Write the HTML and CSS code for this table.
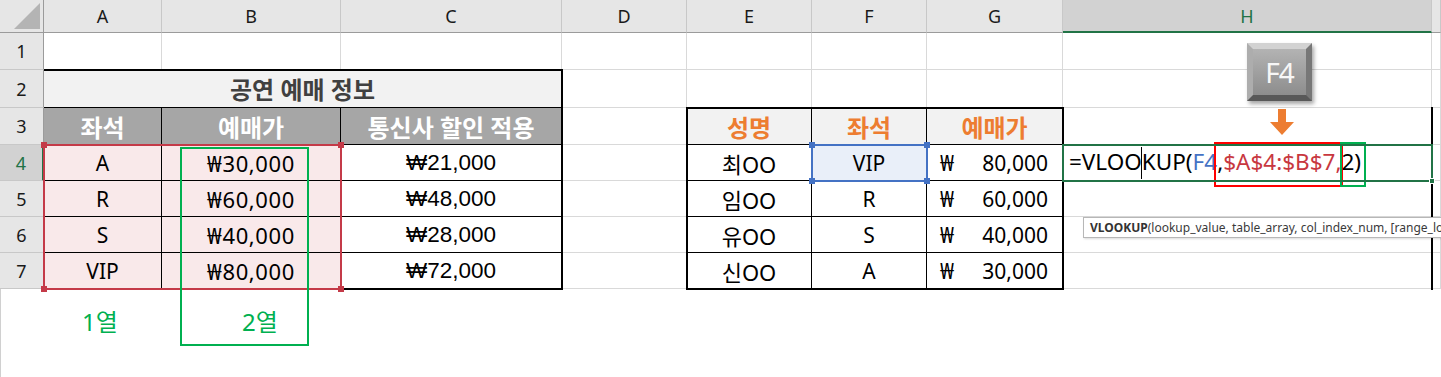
FILE: index.html
```html
<!DOCTYPE html>
<html lang="ko">
<head>
<meta charset="utf-8">
<title>VLOOKUP F4</title>
<link rel="stylesheet" href="styles.css">
</head>
<body>
<div class="sheet">
  <div class="grid">
    <!-- column headers -->
    <div class="corner"><svg width="26" height="26" viewBox="0 0 26 26"><polygon points="26,0 26,26 0,26" fill="#b4b4b4"/></svg></div>
    <div class="ch">A</div>
    <div class="ch">B</div>
    <div class="ch">C</div>
    <div class="ch">D</div>
    <div class="ch">E</div>
    <div class="ch">F</div>
    <div class="ch">G</div>
    <div class="ch sel">H</div>
    <div class="ch"></div>

    <!-- row 1 -->
    <div class="rh">1</div>
    <div class="c"></div><div class="c"></div><div class="c"></div><div class="c"></div>
    <div class="c"></div><div class="c"></div><div class="c"></div><div class="c"></div><div class="c"></div>

    <!-- row 2 -->
    <div class="rh">2</div>
    <div class="c title">공연 예매 정보</div>
    <div class="c"></div><div class="c"></div><div class="c"></div><div class="c"></div><div class="c"></div><div class="c"></div>

    <!-- row 3 -->
    <div class="rh">3</div>
    <div class="c th bk-r">좌석</div>
    <div class="c th bk-r">예매가</div>
    <div class="c th">통신사 할인 적용</div>
    <div class="c"></div>
    <div class="c oh bk-r">성명</div>
    <div class="c oh bk-r">좌석</div>
    <div class="c oh">예매가</div>
    <div class="c"></div>
    <div class="c"></div>

    <!-- row 4 -->
    <div class="rh sel">4</div>
    <div class="c pk bk-r bk-b">A</div>
    <div class="c pk won bk-r bk-b">₩30,000</div>
    <div class="c cc bk-b">₩21,000</div>
    <div class="c"></div>
    <div class="c nm bk-r bk-b">최OO</div>
    <div class="c bl bk-r bk-b">VIP</div>
    <div class="c acct bk-b"><span>₩</span><span>80,000</span></div>
    <div class="c fx"><span class="formula">=VLOO<span class="cur"></span>KUP(<span class="ref-b">F4</span><span class="rb">,<span class="ref-r">$A$4:$B$7,</span></span><span class="gb">2)</span></span></div>
    <div class="c"></div>

    <!-- row 5 -->
    <div class="rh">5</div>
    <div class="c pk bk-r bk-b">R</div>
    <div class="c pk won bk-r bk-b">₩60,000</div>
    <div class="c cc bk-b">₩48,000</div>
    <div class="c"></div>
    <div class="c nm bk-r bk-b">임OO</div>
    <div class="c bk-r bk-b">R</div>
    <div class="c acct bk-b"><span>₩</span><span>60,000</span></div>
    <div class="c"></div>
    <div class="c"></div>

    <!-- row 6 -->
    <div class="rh">6</div>
    <div class="c pk bk-r bk-b">S</div>
    <div class="c pk won bk-r bk-b">₩40,000</div>
    <div class="c cc bk-b">₩28,000</div>
    <div class="c"></div>
    <div class="c nm bk-r bk-b">유OO</div>
    <div class="c bk-r bk-b">S</div>
    <div class="c acct bk-b"><span>₩</span><span>40,000</span></div>
    <div class="c"></div>
    <div class="c"></div>

    <!-- row 7 -->
    <div class="rh">7</div>
    <div class="c pk bk-r bk-b">VIP</div>
    <div class="c pk won bk-r bk-b">₩80,000</div>
    <div class="c cc bk-b">₩72,000</div>
    <div class="c"></div>
    <div class="c nm bk-r bk-b">신OO</div>
    <div class="c bk-r bk-b">A</div>
    <div class="c acct bk-b"><span>₩</span><span>30,000</span></div>
    <div class="c"></div>
    <div class="c"></div>

    <!-- below -->
    <div class="tail">
      <div class="lbl lbl1">1열</div>
      <div class="lbl lbl2">2열</div>
    </div>
  </div>

  <div class="overlay">
    <div class="frame-l"></div>
    <div class="frame-r"></div>
    <div class="line-h"></div>
    <div class="rng rng-red"><i class="k tl"></i><i class="k tr"></i><i class="k bl"></i><i class="k br"></i></div>
    <div class="rng rng-blue"><i class="k tl"></i><i class="k tr"></i><i class="k bl"></i><i class="k br"></i></div>
    <div class="active"><i class="handle"></i></div>

    <div class="note-box"></div>
    <div class="key">F4</div>
    <svg class="arrow" width="24" height="26" viewBox="0 0 24 26"><polygon points="8,0 16,0 16,13 24,13 12,26 0,13 8,13" fill="#ed7d31"/></svg>
    <div class="tip"><b>VLOOKUP</b>(lookup_value, table_array, col_index_num, [range_lookup])</div>
  </div>
</div>
</body>
</html>
```

FILE: styles.css
```css
* { box-sizing: border-box; margin: 0; padding: 0; }

body {
  margin: 0;
  width: 1441px;
  height: 377px;
  overflow: hidden;
  background: #fff;
  font-family: "Noto Sans", "Noto Sans CJK KR", sans-serif;
}

.sheet {
  position: relative;
  width: 1441px;
  height: 377px;
  overflow: hidden;
}

.grid,
.overlay {
  display: grid;
  grid-template-columns: 44px 118px 179px 221px 125px 125px 115px 136px 369px 9px;
  grid-template-rows: 33px 37px 38px 37px 36px 36px 36px 36px 88px;
}

.overlay {
  position: absolute;
  inset: 0;
  pointer-events: none;
}

/* headers */
.corner {
  background: #e6e6e6;
  border-right: 1px solid #9b9b9b;
  border-bottom: 1px solid #9b9b9b;
  display: flex;
  align-items: flex-end;
  justify-content: flex-end;
  padding: 0 3px 3px 0;
}

.ch {
  background: #e6e6e6;
  border-right: 1px solid #c8c8c8;
  border-bottom: 1px solid #9b9b9b;
  display: flex;
  align-items: center;
  justify-content: center;
  font-size: 18px;
  color: #1a1a1a;
}

.ch.sel {
  background: #d2d2d2;
  color: #217346;
  border-bottom: 2px solid #217346;
}

.rh {
  background: #e6e6e6;
  border-right: 1px solid #9b9b9b;
  border-bottom: 1px solid #c8c8c8;
  display: flex;
  align-items: center;
  justify-content: center;
  font-size: 18px;
  color: #1a1a1a;
}

.rh.sel {
  background: #d2d2d2;
  color: #217346;
  border-right: 2px solid #217346;
}

/* cells */
.c {
  border-right: 1px solid #d9d9d9;
  border-bottom: 1px solid #d9d9d9;
  display: flex;
  align-items: center;
  justify-content: center;
  font-size: 21px;
  color: #000;
  white-space: nowrap;
}

.bk-r { border-right-color: #000; }
.bk-b { border-bottom-color: #000; }

.title {
  grid-column: span 3;
  background: #f2f2f2;
  color: #404040;
  font-weight: 700;
  font-size: 24px;
  border-bottom-color: #000;
}

.th {
  background: #a6a6a6;
  color: #fff;
  font-weight: 700;
  font-size: 24px;
  border-bottom-color: #000;
}

.oh {
  background: #f2f2f2;
  color: #ed7d31;
  font-weight: 700;
  font-size: 24px;
  border-bottom-color: #000;
}

.pk { background: #f9e9ea; }
.bl { background: #e9eff9; }

.won {
  font-size: 22px;
  letter-spacing: 0.6px;
}

.cc {
  font-family: "Liberation Sans", Arial, sans-serif;
  font-size: 22.5px;
}

.nm { font-size: 22px; }

.acct {
  justify-content: space-between;
  padding: 0 14px 0 13px;
}

.fx {
  justify-content: flex-start;
  padding-left: 6px;
  font-size: 22.5px;
  border-bottom-color: #d9d9d9;
}

.formula { position: relative; }

.cur {
  display: inline-block;
  width: 1px;
  height: 32px;
  margin-left: -1px;
  background: #000;
  vertical-align: middle;
}

.ref-b { color: #4472c4; }
.ref-r { color: #c8373f; }

.rb, .gb { position: relative; }

.rb::after,
.gb::after {
  content: "";
  position: absolute;
  top: -4px;
  bottom: -10px;
  border: 2px solid #ff0000;
}

.rb::after { left: -3px; right: -1px; }

.gb::after {
  left: -2px;
  right: -5px;
  border-color: #00b050;
}

/* bottom area */
.tail {
  grid-column: 1 / -1;
  border-left: 1px solid #d0d0d0;
  display: flex;
  padding-left: 43px;
  padding-top: 18px;
}

.lbl {
  color: #00b050;
  font-size: 24px;
  line-height: 30px;
  text-align: center;
}

.lbl1 { width: 118px; padding-right: 6px; }
.lbl2 { width: 179px; padding-left: 17px; }

/* overlays */
.frame-l {
  grid-column: 2 / 5;
  grid-row: 3 / 9;
  border-top: 2px solid #000;
  border-right: 2px solid #000;
  border-bottom: 2px solid #000;
  margin: -1px -1px -1px 0;
}

.frame-r {
  grid-column: 6 / 9;
  grid-row: 4 / 9;
  border: 2px solid #000;
  margin: -1px;
}

.line-h {
  grid-column: 9;
  grid-row: 4 / 9;
  border-right: 2px solid #000;
  margin: -1px -1px -1px 0;
}

.rng {
  position: relative;
  margin: -1px;
  border: 2px solid;
}

.rng-red {
  grid-column: 2 / 4;
  grid-row: 5 / 9;
  border-color: #c43a48;
  color: #c43a48;
}

.rng-blue {
  grid-column: 7;
  grid-row: 5;
  border-color: #4472c4;
  color: #4472c4;
}

.k {
  position: absolute;
  width: 6px;
  height: 6px;
  background: currentColor;
}

.k.tl { left: -4px; top: -4px; }
.k.tr { right: -4px; top: -4px; }
.k.bl { left: -4px; bottom: -4px; }
.k.br { right: -4px; bottom: -4px; }

.active {
  grid-column: 9;
  grid-row: 5;
  position: relative;
  border: 2px solid #217346;
  margin: -1px;
}

.handle {
  position: absolute;
  right: -4px;
  bottom: -4px;
  width: 6px;
  height: 6px;
  background: #217346;
  border: 1px solid #fff;
}

.note-box {
  position: absolute;
  left: 180px;
  top: 147px;
  width: 129px;
  height: 199px;
  border: 2px solid #00b050;
}

.key {
  position: absolute;
  left: 1247px;
  top: 43px;
  width: 65px;
  height: 58px;
  border: 6px solid;
  border-color: #d2d2d2 #777 #585858 #adadad;
  background: linear-gradient(#b3b3b3, #8d8d8d);
  box-shadow: 2px 3px 4px rgba(0, 0, 0, 0.35);
  color: #f7f7f7;
  font-size: 28px;
  letter-spacing: -1px;
  display: flex;
  align-items: center;
  justify-content: center;
}

.arrow {
  position: absolute;
  left: 1270px;
  top: 109px;
}

.tip {
  position: absolute;
  left: 1083px;
  top: 217px;
  width: 420px;
  height: 21px;
  background: #fff;
  border: 1px solid #b7b7b7;
  box-shadow: 1px 1px 2px rgba(0, 0, 0, 0.15);
  font-size: 12px;
  line-height: 19px;
  padding-left: 6px;
  color: #3a3a3a;
  white-space: nowrap;
}

.tip b { color: #333; }
```
